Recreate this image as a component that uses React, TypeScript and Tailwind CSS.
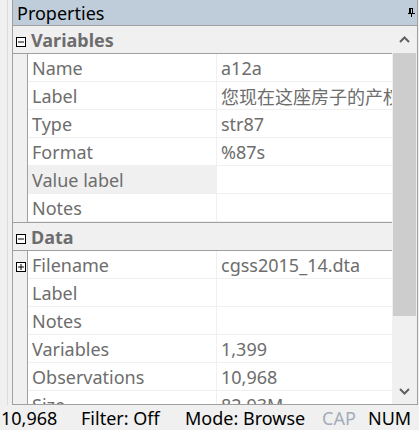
import React from "react";

type Row = { name: string; value?: string; cjk?: boolean; plus?: boolean; shaded?: boolean };

const variables: Row[] = [
   { name: "Name", value: "a12a" },
   { name: "Label", value: "您现在这座房子的产权", cjk: true },
   { name: "Type", value: "str87" },
   { name: "Format", value: "%87s" },
   { name: "Value label", shaded: true },
   { name: "Notes" },
];

const data: Row[] = [
   { name: "Filename", value: "cgss2015_14.dta", plus: true },
   { name: "Label" },
   { name: "Notes" },
   { name: "Variables", value: "1,399" },
   { name: "Observations", value: "10,968" },
   { name: "Size", value: "82.93M" },
];

const Box = ({ plus }: { plus?: boolean }) => (
   <svg width="10" height="10" viewBox="0 0 10 10" className="mt-[4px]">
      <rect x="0.5" y="0.5" width="9" height="9" fill="white" stroke="#000" />
      <line x1="2" y1="5" x2="8" y2="5" stroke="#000" />
      {plus && <line x1="5" y1="2" x2="5" y2="8" stroke="#000" />}
   </svg>
);

const SectionHeader = ({ title, top }: { title: string; top?: boolean }) => (
   <div
      className={`flex shrink-0 items-center bg-[#f0f0f0] border-b border-[#a0a0a0] ${
         top ? "border-t h-[29px]" : "h-[28px]"
      }`}
   >
      <div className="w-[14px] flex justify-center pl-[1px]">
         <Box />
      </div>
      <span className="pl-[4px] font-bold text-[#6d6d6d]">{title}</span>
   </div>
);

const Rows = ({ rows }: { rows: Row[] }) => (
   <div className="flex shrink-0">
      <div className="w-[14px] shrink-0 flex flex-col">
         {rows.map((r) => (
            <div key={r.name} className="h-[28px] flex items-center justify-center pl-[1px]">
               {r.plus && <Box plus />}
            </div>
         ))}
      </div>
      <div className="flex-1 flex flex-col border-l border-[#a0a0a0] bg-white min-w-0">
         {rows.map((r) => (
            <div key={r.name} className="flex shrink-0 h-[28px] border-b border-[#f0f0f0]">
               <div
                  className={`w-[189px] shrink-0 pl-[4px] flex items-center border-r border-[#f0f0f0] ${
                     r.shaded ? "bg-[#f0f0f0]" : ""
                  }`}
               >
                  {r.name}
               </div>
               <div className="flex-1 min-w-0 overflow-hidden whitespace-nowrap pl-[4px] flex items-center">
                  {r.cjk ? (
                     <span className="text-[18px] font-['Noto_Sans_CJK_SC',sans-serif]">{r.value}</span>
                  ) : (
                     r.value
                  )}
               </div>
            </div>
         ))}
      </div>
   </div>
);

const Chevron = ({ up }: { up?: boolean }) => (
   <svg width="11" height="7" viewBox="0 0 11 7">
      <polyline
         points={up ? "1,6 5.5,1.5 10,6" : "1,1 5.5,5.5 10,1"}
         fill="none"
         stroke="#606060"
         strokeWidth="2"
      />
   </svg>
);

const App = () => {
   return (
      <div className="w-[419px] h-[430px] bg-[#f0f0f0] flex flex-col overflow-hidden font-['Noto_Sans',sans-serif] text-[18px] leading-none">
         <div className="flex h-[405px] shrink-0">
            <div className="w-[12px] flex">
               <div className="w-[7px]" />
               <div className="w-[1px] bg-[#dcdcdc]" />
            </div>
            <div className="w-[406px] flex flex-col border-l border-r border-b border-[#a0a0a0] overflow-hidden">
               <div className="h-[26px] shrink-0 bg-[#bfcddb] border-b border-[#a0a0a0] flex items-center justify-between pl-[4px] pr-[2px]">
                  <span className="text-black">Properties</span>
                  <svg width="7" height="9" viewBox="0 0 7 9">
                     <rect x="1.5" y="0.5" width="3" height="5" fill="none" stroke="#000" />
                     <rect x="1" y="0" width="2" height="6" fill="#000" />
                     <line x1="0" y1="5.5" x2="7" y2="5.5" stroke="#000" />
                     <line x1="3.5" y1="6" x2="3.5" y2="9" stroke="#000" />
                  </svg>
               </div>
               <div className="flex flex-1 min-h-0">
                  <div className="flex-1 min-w-0 flex flex-col text-[#6d6d6d] overflow-hidden">
                     <SectionHeader title="Variables" />
                     <Rows rows={variables} />
                     <SectionHeader title="Data" top />
                     <Rows rows={data} />
                  </div>
                  <div className="w-[25px] shrink-0 bg-[#f0f0f0] flex flex-col">
                     <div className="h-[27px] flex items-center justify-center">
                        <Chevron up />
                     </div>
                     <div className="h-[263px] mx-[1px] bg-[#cdcdcd]" />
                     <div className="flex-1 flex items-end justify-center pb-[9px]">
                        <Chevron />
                     </div>
                  </div>
               </div>
            </div>
         </div>
         <div className="flex-1 flex items-center text-black whitespace-nowrap">
            <span className="w-[81px] pl-[1px]">10,968</span>
            <span className="w-[104px]">Filter: Off</span>
            <span className="w-[137px]">Mode: Browse</span>
            <span className="w-[46px] text-[#a3adb8]">CAP</span>
            <span>NUM</span>
         </div>
      </div>
   );
};

export default App;
